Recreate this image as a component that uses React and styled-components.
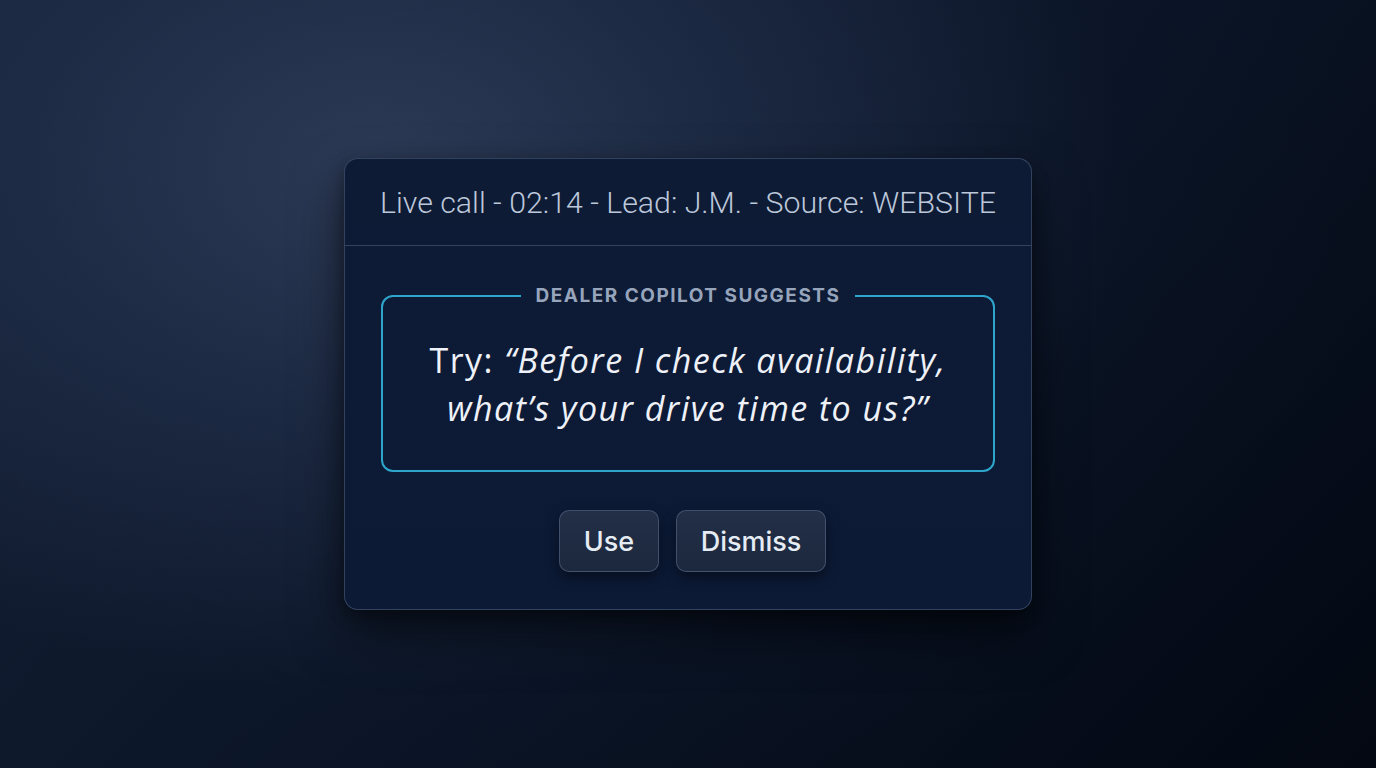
import React from 'react';
import styled, { createGlobalStyle } from 'styled-components';

const GlobalStyle = createGlobalStyle`
  html, body {
    margin: 0;
    padding: 0;
    height: 100%;
  }
  body {
    background: #070e1d;
  }
`;

const Page = styled.div`
  width: 1376px;
  height: 768px;
  display: flex;
  align-items: flex-start;
  justify-content: center;
  padding-top: 158px;
  box-sizing: border-box;
  background:
    radial-gradient(ellipse 1000px 700px at 380px 170px, rgba(46, 60, 88, 0.95) 0%, rgba(34, 48, 76, 0.7) 35%, rgba(14, 24, 44, 0.2) 75%, rgba(10, 18, 36, 0) 100%),
    linear-gradient(135deg, #172339 0%, #0b1527 50%, #030812 100%);
`;

const Card = styled.div`
  width: 688px;
  box-sizing: border-box;
  background: linear-gradient(180deg, #0e1b35 0%, #0c1a36 100%);
  border: 1px solid rgba(120, 140, 175, 0.35);
  border-radius: 14px;
  box-shadow: 0 24px 50px rgba(0, 0, 0, 0.5), 0 6px 16px rgba(0, 0, 0, 0.35);
`;

const Header = styled.div`
  height: 86px;
  display: flex;
  align-items: center;
  justify-content: center;
  border-bottom: 1px solid rgba(120, 140, 175, 0.35);
  font-family: Roboto, "Liberation Sans", sans-serif;
  font-size: 30.3px;
  font-weight: 300;
  color: #bcc7da;
`;

const Body = styled.div`
  padding: 39px 36px 37px;
  display: flex;
  flex-direction: column;
  align-items: center;
`;

const Suggestion = styled.fieldset`
  margin: 0;
  width: 100%;
  box-sizing: border-box;
  border: 2px solid #2ea6cc;
  border-radius: 12px;
  padding: 29px 10px 38px;
  text-align: center;
`;

const Label = styled.legend`
  margin: 0 auto;
  padding: 0 15px;
  font-family: Inter, "Open Sans", sans-serif;
  font-weight: 700;
  font-size: 19px;
  line-height: 22px;
  letter-spacing: 1.5px;
  color: #97a5bc;
  text-transform: uppercase;
`;

const Quote = styled.p`
  margin: 0;
  font-family: "Open Sans", Lato, sans-serif;
  font-size: 34px;
  line-height: 48px;
  color: #eef2f8;
  letter-spacing: 1.45px;
`;

const Said = styled.em`
  font-style: italic;
`;

const Actions = styled.div`
  margin-top: 38px;
  padding-left: 9px;
  display: flex;
  gap: 17px;
`;

const Button = styled.button`
  height: 62px;
  padding: 0 20px;
  min-width: ${({ $wide }) => ($wide ? 150 : 100)}px;
  background: linear-gradient(180deg, #222f46 0%, #1c283e 100%);
  border: 1px solid rgba(130, 150, 185, 0.35);
  border-radius: 10px;
  box-shadow: 0 6px 14px rgba(0, 0, 0, 0.45);
  color: #e6ecf4;
  font-family: Inter, "Liberation Sans", sans-serif;
  font-size: 27px;
  font-weight: 500;
  cursor: pointer;
`;

export default function App() {
  return (
    <>
      <GlobalStyle />
      <Page>
        <Card>
          <Header>Live call - 02:14 - Lead: J.M. - Source: WEBSITE</Header>
          <Body>
            <Suggestion>
              <Label>Dealer Copilot Suggests</Label>
              <Quote>
                Try: <Said>“Before I check availability,</Said>
                <br />
                <Said>what’s your drive time to us?”</Said>
              </Quote>
            </Suggestion>
            <Actions>
              <Button>Use</Button>
              <Button $wide>Dismiss</Button>
            </Actions>
          </Body>
        </Card>
      </Page>
    </>
  );
}
